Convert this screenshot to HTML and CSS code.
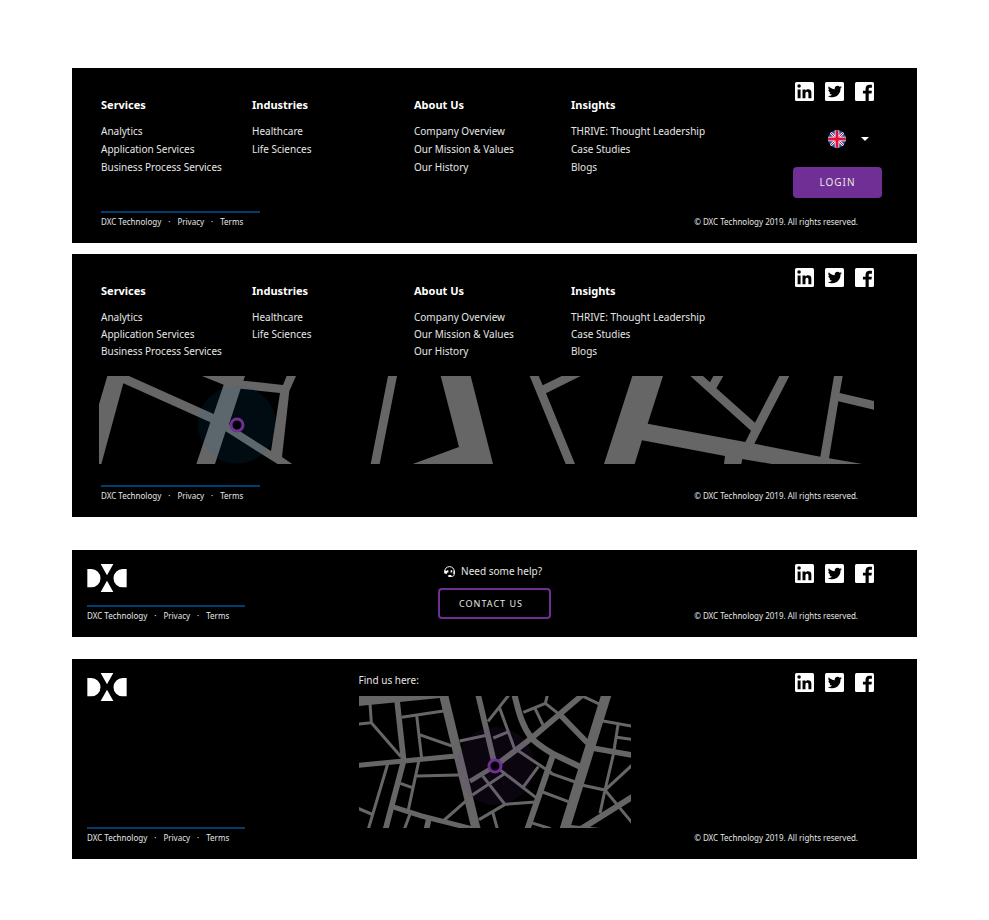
FILE: index.html
```html
<!DOCTYPE html>
<html lang="en">
<head>
<meta charset="utf-8">
<meta name="viewport" content="width=device-width, initial-scale=1">
<title>DXC Technology footers</title>
<link rel="stylesheet" href="styles.css">
</head>
<body>
<svg class="sprite" aria-hidden="true">
  <symbol id="linkedin" viewBox="0 0 18 18">
    <rect width="18" height="18" rx="1.500" fill="#fff"/>
    <path d="M15.500 15.500v-5.300a3.260 3.260 0 0 0-3.260-3.260c-.85 0-1.840.52-2.320 1.300V7.130H7.130v8.370h2.790v-4.930c0-.77.62-1.400 1.390-1.400a1.400 1.400 0 0 1 1.400 1.400v4.930zM3.880 5.560a1.680 1.680 0 1 0 0-3.370 1.680 1.680 0 0 0 0 3.370zM5.270 15.500V7.130H2.500v8.370z"/>
  </symbol>
  <symbol id="twitter" viewBox="0 0 18 18">
    <rect width="18" height="18" rx="1.500" fill="#fff"/>
    <path transform="translate(1 1.600) scale(.64)" d="M23.460 5c-.77.35-1.600.58-2.460.69.88-.53 1.560-1.370 1.880-2.380-.83.5-1.750.85-2.720 1.050C19.370 3.500 18.260 3 17 3c-2.350 0-4.270 1.920-4.270 4.290 0 .34.04.67.11.98C9.280 8.090 6.110 6.380 4 3.790c-.37.63-.58 1.370-.58 2.150 0 1.490.75 2.810 1.910 3.560-.71 0-1.370-.2-1.950-.5v.03c0 2.080 1.480 3.820 3.440 4.210a4.220 4.220 0 0 1-1.930.07 4.280 4.280 0 0 0 4 2.980 8.521 8.521 0 0 1-5.330 1.840c-.34 0-.68-.02-1.020-.06C4.440 19.290 6.700 20 9.120 20 17 20 21.330 13.460 21.330 7.790c0-.19 0-.37-.01-.56.84-.6 1.560-1.360 2.140-2.230z"/>
  </symbol>
  <symbol id="facebook" viewBox="0 0 18 18">
    <rect width="18" height="18" rx="1.500" fill="#fff"/>
    <path d="M10 18v-7H7.500V8.300H10V6.500C10 4 11.500 2.700 13.700 2.700H16v2.700h-1.600c-1 0-1.400.5-1.400 1.300v1.600h3l-.4 2.700H13v7z"/>
  </symbol>
  <symbol id="dxc" viewBox="0 0 120 84">
    <path fill="#fff" d="M1 15h12a27 27 0 0 1 0 55H1zM119 15h-12a27 27 0 0 0 0 55h12zM41 0h38L60 34zM41 84h38L60 50z"/>
  </symbol>
  <symbol id="headset" viewBox="0 0 33 34">
    <path fill="none" stroke="#fff" stroke-width="3" d="M2 17C2 8 8 2 16.500 2S31 8 31 17v9c0 4-3 6-7 6h-7"/>
    <path fill="#fff" d="M0 14h4l5 3v7H5c-3 0-5-2-5-5zM33 14h-3l-2 10h5zM8 13h5v7H8zM20 13h5v7h-5zM13 28h9v6h-9z"/>
  </symbol>
</svg>

<footer class="footer footer-login">
  <div class="top">
    <nav class="column">
      <h2>Services</h2>
      <ul><li><a href="#">Analytics</a></li><li><a href="#">Application Services</a></li><li><a href="#">Business Process Services</a></li></ul>
    </nav>
    <nav class="column">
      <h2>Industries</h2>
      <ul><li><a href="#">Healthcare</a></li><li><a href="#">Life Sciences</a></li></ul>
    </nav>
    <nav class="column">
      <h2>About Us</h2>
      <ul><li><a href="#">Company Overview</a></li><li><a href="#">Our Mission &amp; Values</a></li><li><a href="#">Our History</a></li></ul>
    </nav>
    <nav class="column">
      <h2>Insights</h2>
      <ul><li><a href="#">THRIVE: Thought Leadership</a></li><li><a href="#">Case Studies</a></li><li><a href="#">Blogs</a></li></ul>
    </nav>
    <div class="side">
      <div class="social">
        <a href="#" aria-label="LinkedIn"><svg><use href="#linkedin"/></svg></a>
        <a href="#" aria-label="Twitter"><svg><use href="#twitter"/></svg></a>
        <a href="#" aria-label="Facebook"><svg><use href="#facebook"/></svg></a>
      </div>
      <label class="language">
        <svg class="flag" viewBox="0 0 36 36" aria-hidden="true">
          <clipPath id="disc"><circle cx="18" cy="18" r="18"/></clipPath>
          <g clip-path="url(#disc)">
            <path fill="#1f57a8" d="M0 0h36v36H0z"/>
            <path stroke="#dfe4f0" stroke-width="5" d="M0 0l36 36M36 0L0 36"/>
            <path stroke="#e0123a" stroke-width="2" d="M0 0l36 36M36 0L0 36"/>
            <path stroke="#fff" stroke-width="9" d="M18 0v36M0 18h36"/>
            <path stroke="#e0123a" stroke-width="6" d="M18 0v36M0 18h36"/>
          </g>
        </svg>
        <select aria-label="Language"><option>EN</option></select>
        <svg class="caret" viewBox="0 0 8 4" aria-hidden="true"><path fill="#fff" d="M0 0h8L4 4z"/></svg>
      </label>
      <button class="button button-solid" type="button">LOGIN</button>
    </div>
  </div>
  <div class="bottom">
    <ul class="legal"><li><a href="#">DXC Technology</a></li><li><a href="#">Privacy</a></li><li><a href="#">Terms</a></li></ul>
    <p class="copyright">© DXC Technology 2019. All rights reserved.</p>
  </div>
</footer>

<footer class="footer footer-wide-map">
  <div class="top">
    <nav class="column">
      <h2>Services</h2>
      <ul><li><a href="#">Analytics</a></li><li><a href="#">Application Services</a></li><li><a href="#">Business Process Services</a></li></ul>
    </nav>
    <nav class="column">
      <h2>Industries</h2>
      <ul><li><a href="#">Healthcare</a></li><li><a href="#">Life Sciences</a></li></ul>
    </nav>
    <nav class="column">
      <h2>About Us</h2>
      <ul><li><a href="#">Company Overview</a></li><li><a href="#">Our Mission &amp; Values</a></li><li><a href="#">Our History</a></li></ul>
    </nav>
    <nav class="column">
      <h2>Insights</h2>
      <ul><li><a href="#">THRIVE: Thought Leadership</a></li><li><a href="#">Case Studies</a></li><li><a href="#">Blogs</a></li></ul>
    </nav>
    <div class="side">
      <div class="social">
        <a href="#" aria-label="LinkedIn"><svg><use href="#linkedin"/></svg></a>
        <a href="#" aria-label="Twitter"><svg><use href="#twitter"/></svg></a>
        <a href="#" aria-label="Facebook"><svg><use href="#facebook"/></svg></a>
      </div>
    </div>
  </div>
  <svg class="wide-map" viewBox="0 0 2325 264" role="img" aria-label="Office location map">
    <g fill="#666">
      <g transform="translate(-27 -18)">
        <path d="M52 18h65l254 114 30-88-65-26h129l-5 14 119 13 11-27h28l-20 45-22 198 32 22h-44L407 184l-32 98h-56l42-125L100 40 34 282h-7V103zM452 56l-35 107 126 80 27-174z" fill-rule="evenodd"/>
      </g>
      <g transform="translate(783 -18)">
        <path d="M84 18h27L59 282H32zM242 18h90l67 264H158l139-51zM509 18h27l12 28 57-28h57L558 70l87 212h-28z"/>
      </g>
      <g transform="translate(1503 -18)">
        <path d="M97 18h92l-46 143 293 55 17-34L271 18h38l21 19 10-19h30l-21 37 116 103 73-140h30L463 221l198 39 41-242h26l-9 51 103 24v26L715 94l-28 171 100 17H515l-88-15-3 15h-52l3-24-249-47-22 71H12z"/>
      </g>
    </g>
    <circle cx="414" cy="146" r="117" fill="#0067b3" fill-opacity=".1"/>
    <circle cx="414" cy="147" r="18" fill="#000" stroke="#702f94" stroke-width="9"/>
  </svg>
  <div class="bottom">
    <ul class="legal"><li><a href="#">DXC Technology</a></li><li><a href="#">Privacy</a></li><li><a href="#">Terms</a></li></ul>
    <p class="copyright">© DXC Technology 2019. All rights reserved.</p>
  </div>
</footer>

<footer class="footer compact footer-help">
  <div class="start">
    <svg class="logo" role="img" aria-label="DXC"><use href="#dxc"/></svg>
    <ul class="legal"><li><a href="#">DXC Technology</a></li><li><a href="#">Privacy</a></li><li><a href="#">Terms</a></li></ul>
  </div>
  <div class="help">
    <p><svg class="headset" aria-hidden="true"><use href="#headset"/></svg>Need some help?</p>
    <button class="button button-outline" type="button">CONTACT US</button>
  </div>
  <div class="end">
    <div class="social">
      <a href="#" aria-label="LinkedIn"><svg><use href="#linkedin"/></svg></a>
      <a href="#" aria-label="Twitter"><svg><use href="#twitter"/></svg></a>
      <a href="#" aria-label="Facebook"><svg><use href="#facebook"/></svg></a>
    </div>
    <p class="copyright">© DXC Technology 2019. All rights reserved.</p>
  </div>
</footer>

<footer class="footer compact footer-find">
  <div class="start">
    <svg class="logo" role="img" aria-label="DXC"><use href="#dxc"/></svg>
    <ul class="legal"><li><a href="#">DXC Technology</a></li><li><a href="#">Privacy</a></li><li><a href="#">Terms</a></li></ul>
  </div>
  <div class="find">
    <p>Find us here:</p>
    <svg class="city-map" viewBox="0 0 816 396" role="img" aria-label="Office location map">
      <g fill="none" stroke="#666">
        <g transform="translate(-12 -18)">
          <path fill="#666" stroke="none" d="M12 18h243v6L12 48z"/>
          <path stroke-width="27" d="M264 8l101 416"/>
          <path stroke-width="17" d="M126 30l20 182-56 212"/>
          <path stroke-width="15" d="M2 227l300-29M112 350l88 28 170 43"/>
          <path stroke-width="17" d="M222 384l-8 36"/>
          <path stroke-width="9" d="M45 40l4 58-45 5M49 98l89 102M140 82l125-19M185 76l15 130M193 134l98 34M192 210l-33 154M186 258l126-3M136 280l36 13M98 222L38 424M2 352l47 20M165 372l-17 46M268 390l66-58M314 153l88-19"/>
        </g>
        <g transform="translate(393 -18)">
          <path stroke-width="30" d="M351 8L222 424"/>
          <path stroke-width="17" d="M-37 8L15 228l110-84L285 8M208 72l84 86M306 174l124 22"/>
          <path stroke-width="14" d="M15 228l-75 46"/>
          <path stroke-width="18" d="M72 8c15 65 25 100 53 137 22 22 40 32 65 47l80 38M190 192l-80 232M430 319L275 416"/>
          <path fill="#666" stroke="none" d="M220 403l110 11H215z"/>
          <path stroke-width="9" d="M-6 94L62 8M28 52l47 128M10 144l48-20M100 67l66-27 8-32M166 40l43 34M135 55l24 50M270 15l60 28M335 92l95 17M384 104l-14 90-25 106-15 70M380 142l50 7M275 285l70 15 85-78M345 300l85 103M182 250l74 26M158 306l77 29M120 397l62 19M78 178l108 72M145 230l-46 62M15 228l126 97M48 248l-101 67M-22 258l67 85 92-7M45 343l-78 46M8 366l15 54"/>
        </g>
      </g>
      <circle cx="409" cy="210" r="117" fill="#702f94" fill-opacity=".1"/>
      <circle cx="408" cy="210" r="18" fill="#000" stroke="#702f94" stroke-width="9"/>
    </svg>
  </div>
  <div class="end">
    <div class="social">
      <a href="#" aria-label="LinkedIn"><svg><use href="#linkedin"/></svg></a>
      <a href="#" aria-label="Twitter"><svg><use href="#twitter"/></svg></a>
      <a href="#" aria-label="Facebook"><svg><use href="#facebook"/></svg></a>
    </div>
    <p class="copyright">© DXC Technology 2019. All rights reserved.</p>
  </div>
</footer>
</body>
</html>
```
FILE: styles.css
```css
* {
  box-sizing: border-box;
}

body {
  margin: 0;
  padding: 68px 72px 60px;
  background: #fff;
  color: #e6e6e6;
  font: 10px/17px "Noto Sans", "Open Sans", sans-serif;
}

.sprite {
  display: none;
}

h2,
p,
ul {
  margin: 0;
  padding: 0;
}

ul {
  list-style: none;
}

a {
  color: inherit;
  text-decoration: none;
}

svg {
  display: block;
}

.footer {
  background: #000;
  padding: 14px 35px 15px 29px;
}

.footer-wide-map {
  margin-top: 11px;
}

.footer-help {
  margin-top: 33px;
}

.footer-find {
  margin-top: 22px;
}

/* Link columns */
.top {
  display: grid;
  grid-template-columns: 151fr 162fr 157fr 222fr 89px;
}

.column {
  padding-top: 15px;
  white-space: nowrap;
}

.column h2 {
  margin-bottom: 10px;
  color: #fff;
  font-size: 11px;
  line-height: 16px;
  font-weight: 700;
}

.footer-login .column {
  line-height: 18px;
}

.footer-login .column h2 {
  margin-bottom: 9px;
}

.side {
  display: flex;
  flex-direction: column;
}

.social {
  display: flex;
  gap: 11px;
  margin-left: 2px;
}

.social svg {
  width: 19px;
  height: 19px;
}

.language {
  position: relative;
  display: flex;
  align-items: center;
  align-self: flex-end;
  height: 18px;
  margin: 29px 6px 19px 0;
}

.flag {
  width: 18px;
  height: 18px;
}

.language select {
  width: 30px;
  height: 18px;
  padding: 0;
  border: 0;
  appearance: none;
  background: transparent;
  color: transparent;
}

.caret {
  position: absolute;
  right: 7px;
  width: 8px;
  height: 4px;
  pointer-events: none;
}

.button {
  height: 31px;
  border: 0;
  border-radius: 4px;
  color: #e6e6e6;
  font: inherit;
  letter-spacing: 1px;
}

.button-solid {
  background: #702f94;
}

.button-outline {
  padding: 0 26px 0 19px;
  border: 2px solid #702f94;
  background: transparent;
  font-size: 9px;
}

/* Legal row */
.bottom {
  display: flex;
  justify-content: space-between;
  align-items: flex-end;
  margin-top: 13px;
}

.legal {
  display: flex;
  width: 159px;
  padding-top: 3px;
  border-top: 2px solid #003e70;
  font-size: 8px;
  line-height: 12px;
  white-space: nowrap;
}

.legal li + li::before {
  content: "·";
  margin: 0 7px;
}

.copyright {
  margin-right: 24px;
  font-size: 8px;
  line-height: 12px;
  white-space: nowrap;
}

.wide-map {
  width: calc(100% - 6px);
  margin: 16px 0 0 -2px;
}

.footer-wide-map .bottom {
  margin-top: 21px;
}

/* Compact footers */
.compact {
  display: grid;
  grid-template-columns: 1fr auto 1fr;
  padding: 14px 15px 15px;
}

.start,
.end {
  display: flex;
  flex-direction: column;
  justify-content: space-between;
}

.end {
  align-items: flex-end;
}

.end .social {
  margin: 0 28px 0 0;
}

.end .copyright {
  margin-right: 44px;
}

.compact .legal {
  width: 158px;
}

.logo {
  width: 40px;
  height: 28px;
}

.help {
  min-height: 58px;
}

.help p,
.find p {
  line-height: 14px;
}

.help p {
  display: flex;
  align-items: center;
  gap: 6px;
  margin: 0 0 10px 6px;
}

.headset {
  width: 11px;
  height: 11px;
}

.find p {
  margin-bottom: 9px;
}

.find {
  min-height: 171px;
}

.city-map {
  width: 272px;
}
```
